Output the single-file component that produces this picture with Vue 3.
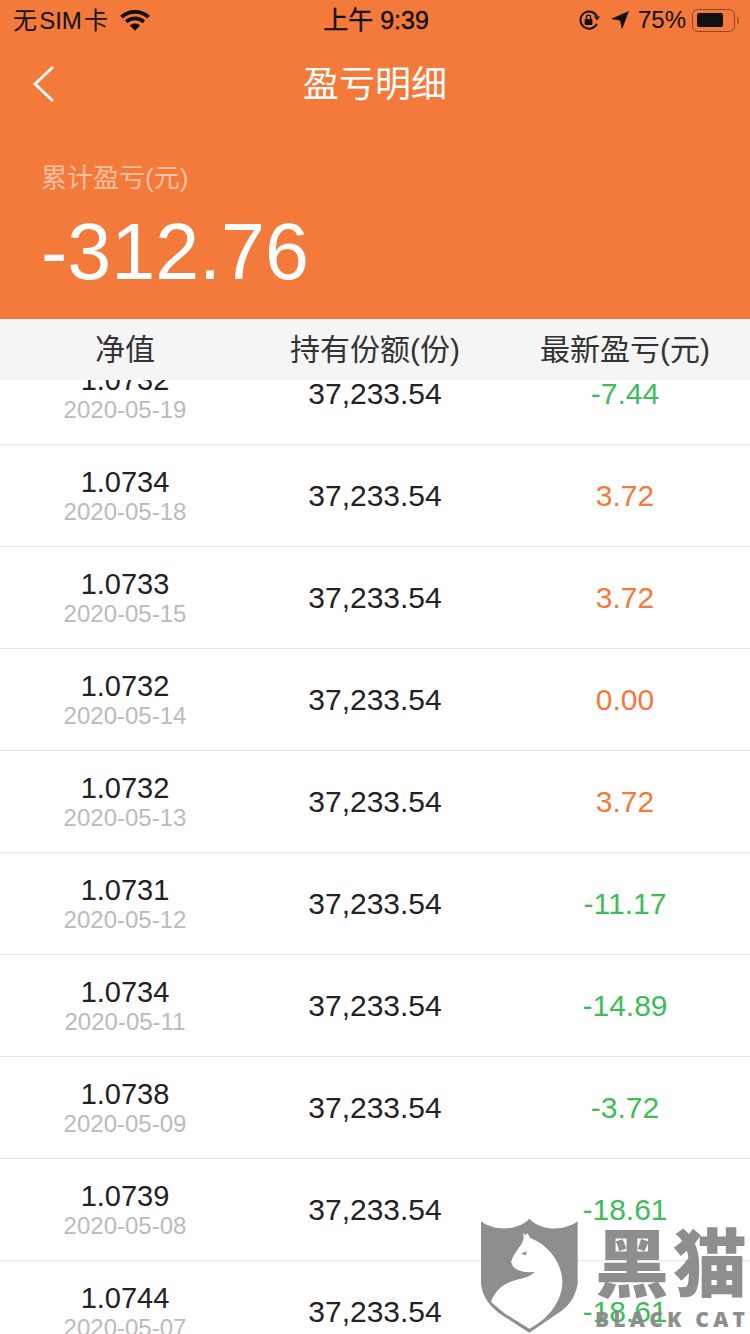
<script setup>
const rows = [
  { value: '1.0732', date: '2020-05-19', shares: '37,233.54', profit: '-7.44' },
  { value: '1.0734', date: '2020-05-18', shares: '37,233.54', profit: '3.72' },
  { value: '1.0733', date: '2020-05-15', shares: '37,233.54', profit: '3.72' },
  { value: '1.0732', date: '2020-05-14', shares: '37,233.54', profit: '0.00' },
  { value: '1.0732', date: '2020-05-13', shares: '37,233.54', profit: '3.72' },
  { value: '1.0731', date: '2020-05-12', shares: '37,233.54', profit: '-11.17' },
  { value: '1.0734', date: '2020-05-11', shares: '37,233.54', profit: '-14.89' },
  { value: '1.0738', date: '2020-05-09', shares: '37,233.54', profit: '-3.72' },
  { value: '1.0739', date: '2020-05-08', shares: '37,233.54', profit: '-18.61' },
  { value: '1.0744', date: '2020-05-07', shares: '37,233.54', profit: '-18.61' }
]

const isLoss = (profit) => profit.startsWith('-')
</script>

<template>
  <div class="page">
    <header class="top">
      <div class="status">
        <div class="status-left">
          <span class="carrier">无 SIM 卡</span>
          <svg width="30" height="23" viewBox="0 0 32 24">
            <path d="M1.5 8.5C9.5 1 22.5 1 30.5 8.5" fill="none" stroke="#111" stroke-width="4" />
            <path d="M6.5 13.5C12 8.6 20 8.6 25.5 13.5" fill="none" stroke="#111" stroke-width="4" />
            <path d="M10.5 17.2C13.8 14.4 18.2 14.4 21.5 17.2L16 23Z" fill="#111" />
          </svg>
        </div>
        <div class="status-time">上午 9:39</div>
        <div class="status-right">
          <svg width="22" height="22" viewBox="0 0 22 22">
            <path d="M18.8 7.4A8.6 8.6 0 1 0 18.8 14.8" fill="none" stroke="#111" stroke-width="1.9" />
            <path d="M16 7.5L22 7.5L19 11.5Z" fill="#111" />
            <rect x="6.6" y="10" width="7.8" height="6" rx="1" fill="#111" />
            <path d="M8.4 10V8.2a2.1 2.1 0 0 1 4.2 0V10" fill="none" stroke="#111" stroke-width="1.4" />
          </svg>
          <svg class="arrow" width="20" height="20" viewBox="0 0 20 20">
            <path d="M19 1L1 9L10 10.4L12 19.5Z" fill="#111" />
          </svg>
          <span class="percent">75%</span>
          <div class="battery"><div class="battery-fill"></div></div>
          <div class="battery-tip"></div>
        </div>
      </div>

      <div class="nav">
        <svg class="back" width="24" height="38" viewBox="0 0 24 38">
          <path d="M21 2L3 19L21 36" fill="none" stroke="#fff" stroke-width="2.8" />
        </svg>
        <h1>盈亏明细</h1>
      </div>

      <div class="summary">
        <div class="summary-label">累计盈亏(元)</div>
        <div class="summary-total">-312.76</div>
      </div>
    </header>

    <div class="table-head">
      <div>净值</div>
      <div>持有份额(份)</div>
      <div>最新盈亏(元)</div>
    </div>

    <div class="list">
      <div class="rows">
        <div v-for="row in rows" :key="row.date" class="row">
          <div class="cell stack">
            <div class="value">{{ row.value }}</div>
            <div class="date">{{ row.date }}</div>
          </div>
          <div class="cell shares">{{ row.shares }}</div>
          <div class="cell profit" :class="isLoss(row.profit) ? 'loss' : 'gain'">{{ row.profit }}</div>
        </div>
      </div>
    </div>

    <div class="watermark">
      <svg width="110" height="122" viewBox="0 0 330 366">
        <path d="M18 28C60 60 130 55 163 20C195 55 265 60 308 28V215C300 260 280 285 240 310L163 362L85 312C45 285 22 255 18 215Z" fill="#8a8a8a" />
        <path d="M143 62L150 70L158 64L165 78C215 95 262 150 262 210C262 270 215 325 163 350L90 305L48 270C60 235 85 215 120 205C150 197 170 192 178 180C150 182 130 178 115 165L108 150C112 135 125 115 140 95C146 85 148 75 143 62Z" fill="#fff" />
        <path d="M138 126L155 117L152 130Z" fill="#8a8a8a" />
      </svg>
      <div class="mark-text">
        <div class="mark-cn">黑猫</div>
        <div class="mark-en">BLACK CAT</div>
      </div>
    </div>
  </div>
</template>

<style scoped>
.page {
  position: relative;
  display: flex;
  flex-direction: column;
  width: 750px;
  height: 1334px;
  overflow: hidden;
  background: #fff;
  font-family: "Liberation Sans", "Noto Sans CJK SC", sans-serif;
}

.top {
  height: 319px;
  background: #f47a3b;
}

.status {
  display: grid;
  grid-template-columns: 1fr auto 1fr;
  align-items: center;
  height: 40px;
  padding: 0 11px 0 13px;
  color: #111;
  font-size: 24px;
}

.status-left {
  display: flex;
  align-items: center;
  gap: 12px;
}

.carrier {
  margin-bottom: 4px;
  word-spacing: -4.5px;
}

.status-time {
  margin-bottom: 4px;
  font-size: 25px;
  -webkit-text-stroke: 0.4px #111;
}

.status-right {
  display: flex;
  align-items: center;
  justify-content: flex-end;
}

.arrow {
  margin-left: 10px;
}

.percent {
  margin-left: 8px;
  font-size: 24px;
}

.battery {
  width: 43px;
  height: 23px;
  margin-left: 6px;
  padding: 3.5px;
  box-sizing: border-box;
  border: 1.5px solid #8f4a22;
  border-radius: 6px;
}

.battery-fill {
  width: 78%;
  height: 100%;
  background: #111;
  border-radius: 2px;
}

.battery-tip {
  width: 2px;
  height: 7px;
  margin-left: 2px;
  background: #a85a2c;
  border-radius: 0 2px 2px 0;
}

.nav {
  position: relative;
  display: flex;
  align-items: center;
  justify-content: center;
  height: 88px;
}

.back {
  position: absolute;
  left: 32px;
  top: 25px;
}

.nav h1 {
  margin: 0 0 6px;
  color: #fff;
  font-size: 36px;
  font-weight: 400;
}

.summary {
  padding: 28px 41px 0;
}

.summary-label {
  color: rgba(255, 255, 255, 0.55);
  font-size: 26px;
  line-height: 44px;
}

.summary-total {
  margin-top: 10px;
  color: #fff;
  font-size: 79px;
  line-height: 84px;
}

.table-head {
  position: relative;
  z-index: 1;
  display: grid;
  grid-template-columns: repeat(3, 1fr);
  height: 61px;
  padding-bottom: 6px;
  box-sizing: border-box;
  align-items: center;
  text-align: center;
  background: #f5f5f5;
  color: #333;
  font-size: 30px;
}

.list {
  flex: 1;
  overflow: hidden;
}

.rows {
  margin-top: -37px;
}

.row {
  display: grid;
  grid-template-columns: repeat(3, 1fr);
  height: 102px;
  box-sizing: border-box;
  align-items: center;
  text-align: center;
  border-bottom: 1px solid #e4e4e4;
}

.stack {
  padding-top: 2px;
}

.value {
  color: #222;
  font-size: 29px;
  line-height: 30px;
}

.date {
  color: #bbb;
  font-size: 24px;
  line-height: 30px;
}

.shares {
  color: #222;
  font-size: 30px;
}

.profit {
  font-size: 30px;
}

.gain {
  color: #f47a3c;
}

.loss {
  color: #3dbd5a;
}

.watermark {
  position: absolute;
  left: 475px;
  top: 1212px;
  display: flex;
  gap: 10px;
  opacity: 0.96;
}

.mark-text {
  color: #8a8a8a;
}

.mark-cn {
  margin-top: 3px;
  font-family: "Noto Sans CJK SC", sans-serif;
  font-size: 74px;
  font-weight: 900;
  line-height: 88px;
  letter-spacing: 4px;
  white-space: nowrap;
}

.mark-en {
  margin-top: 5px;
  font-family: "Open Sans", sans-serif;
  font-size: 21px;
  font-weight: 800;
  line-height: 22px;
  letter-spacing: 4.2px;
  white-space: nowrap;
}
</style>

<style>
body {
  margin: 0;
}
</style>
